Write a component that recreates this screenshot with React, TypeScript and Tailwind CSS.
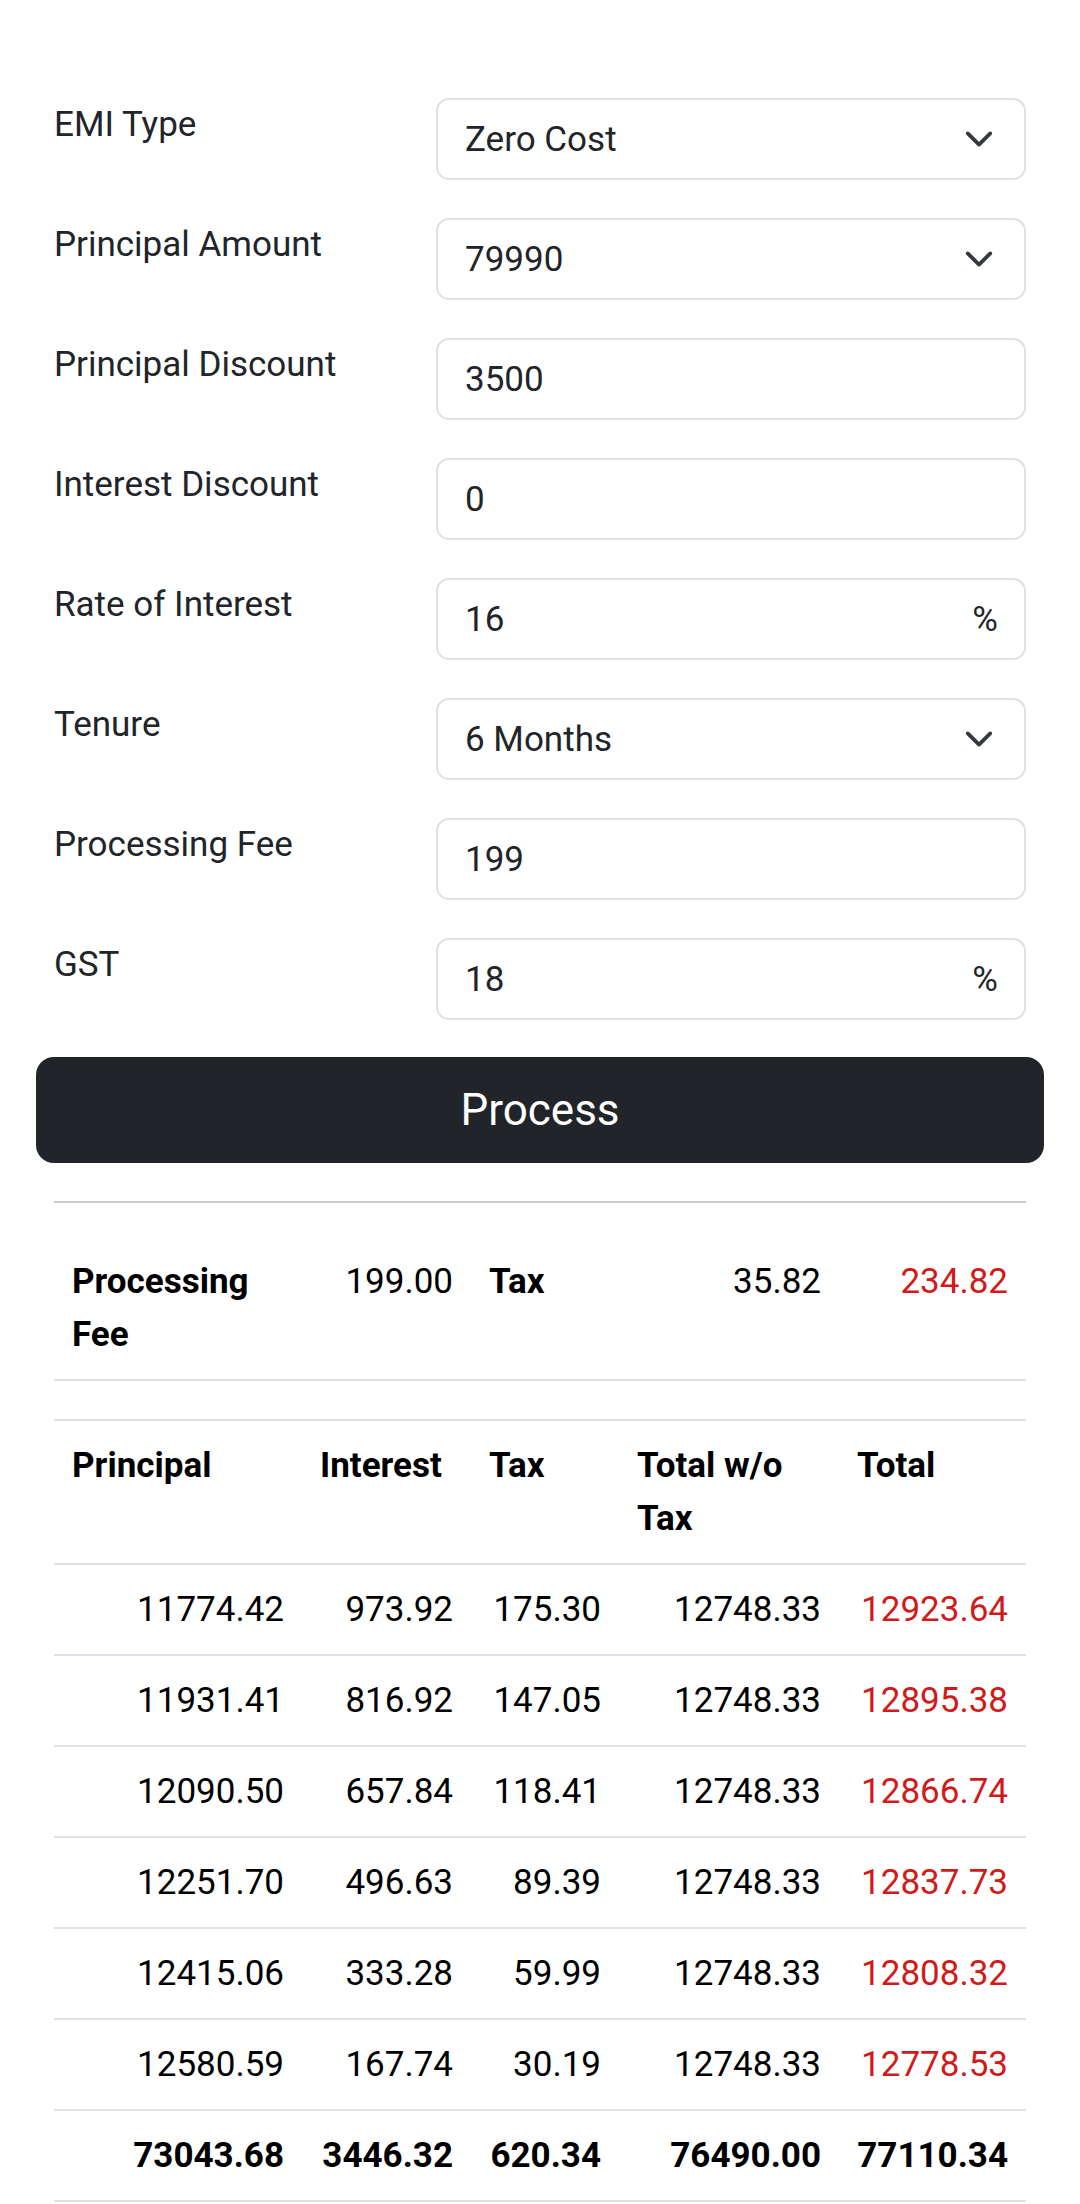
const fields = [
  { label: "EMI Type", value: "Zero Cost", kind: "select" },
  { label: "Principal Amount", value: "79990", kind: "select" },
  { label: "Principal Discount", value: "3500", kind: "text" },
  { label: "Interest Discount", value: "0", kind: "text" },
  { label: "Rate of Interest", value: "16", kind: "percent" },
  { label: "Tenure", value: "6 Months", kind: "select" },
  { label: "Processing Fee", value: "199", kind: "text" },
  { label: "GST", value: "18", kind: "percent" },
];

const rows = [
  ["11774.42", "973.92", "175.30", "12748.33", "12923.64"],
  ["11931.41", "816.92", "147.05", "12748.33", "12895.38"],
  ["12090.50", "657.84", "118.41", "12748.33", "12866.74"],
  ["12251.70", "496.63", "89.39", "12748.33", "12837.73"],
  ["12415.06", "333.28", "59.99", "12748.33", "12808.32"],
  ["12580.59", "167.74", "30.19", "12748.33", "12778.53"],
];

const totals = ["73043.68", "3446.32", "620.34", "76490.00", "77110.34"];

function Chevron() {
  return (
    <svg width="30" height="30" viewBox="0 0 16 16" fill="none">
      <path
        d="m2 5 6 6 6-6"
        stroke="#343a40"
        strokeWidth="2"
        strokeLinecap="round"
        strokeLinejoin="round"
      />
    </svg>
  );
}

function Cols() {
  return (
    <colgroup>
      <col className="w-[248px]" />
      <col className="w-[169px]" />
      <col className="w-[148px]" />
      <col className="w-[220px]" />
      <col />
    </colgroup>
  );
}

export default function App() {
  return (
    <div
      className="min-h-screen bg-white px-[36px] pt-[98px] text-[35px] leading-[53px] text-[#212529]"
      style={{ fontFamily: "Roboto, 'Noto Sans', sans-serif" }}
    >
      {/* Form */}
      <div className="flex flex-col gap-[38px] px-[18px]">
        {fields.map((f) => (
          <div key={f.label} className="grid grid-cols-[382px_1fr]">
            <label>{f.label}</label>
            <div className="flex h-[82px] items-center justify-between rounded-[13px] border-2 border-[#dee2e6] pl-[27px] pr-[26px]">
              <span>{f.value}</span>
              {f.kind === "select" && (
                <span className="mr-[4px] flex">
                  <Chevron />
                </span>
              )}
              {f.kind === "percent" && <span>%</span>}
            </div>
          </div>
        ))}
      </div>

      {/* Process button */}
      <button className="mt-[37px] flex h-[106px] w-full items-center justify-center rounded-[18px] bg-[#212529] text-[44px] text-white">
        Process
      </button>

      <div className="px-[18px]">
        <div className="mt-[38px] h-[2px] bg-[#cbcccd]" />

        {/* Processing fee */}
        <table className="mt-[34px] w-full table-fixed border-collapse text-black">
          <Cols />
          <tbody>
            <tr className="border-b-2 border-[#dee2e6] align-top">
              <td className="px-[18px] py-[18px] font-bold">Processing Fee</td>
              <td className="px-[18px] py-[18px] text-right">199.00</td>
              <td className="px-[18px] py-[18px] font-bold">Tax</td>
              <td className="px-[18px] py-[18px] text-right">35.82</td>
              <td className="px-[18px] py-[18px] text-right text-[#d11a1a]">234.82</td>
            </tr>
          </tbody>
        </table>

        {/* Schedule */}
        <table className="mt-[38px] w-full table-fixed border-collapse text-black">
          <Cols />
          <thead>
            <tr className="border-y-2 border-[#dee2e6] align-top font-bold">
              <th className="px-[18px] py-[18px] text-left">Principal</th>
              <th className="px-[18px] py-[18px] text-left">Interest</th>
              <th className="px-[18px] py-[18px] text-left">Tax</th>
              <th className="px-[18px] py-[18px] text-left">Total w/o Tax</th>
              <th className="px-[18px] py-[18px] text-left">Total</th>
            </tr>
          </thead>
          <tbody>
            {rows.map((r, i) => (
              <tr key={i} className="border-b-2 border-[#dee2e6]">
                <td className="px-[18px] py-[18px] text-right">{r[0]}</td>
                <td className="px-[18px] py-[18px] text-right">{r[1]}</td>
                <td className="px-[18px] py-[18px] text-right">{r[2]}</td>
                <td className="px-[18px] py-[18px] text-right">{r[3]}</td>
                <td className="px-[18px] py-[18px] text-right text-[#d11a1a]">{r[4]}</td>
              </tr>
            ))}
            <tr className="border-b-2 border-[#dee2e6] font-bold">
              {totals.map((t) => (
                <td key={t} className="px-[18px] py-[18px] text-right">
                  {t}
                </td>
              ))}
            </tr>
          </tbody>
        </table>
      </div>
    </div>
  );
}
